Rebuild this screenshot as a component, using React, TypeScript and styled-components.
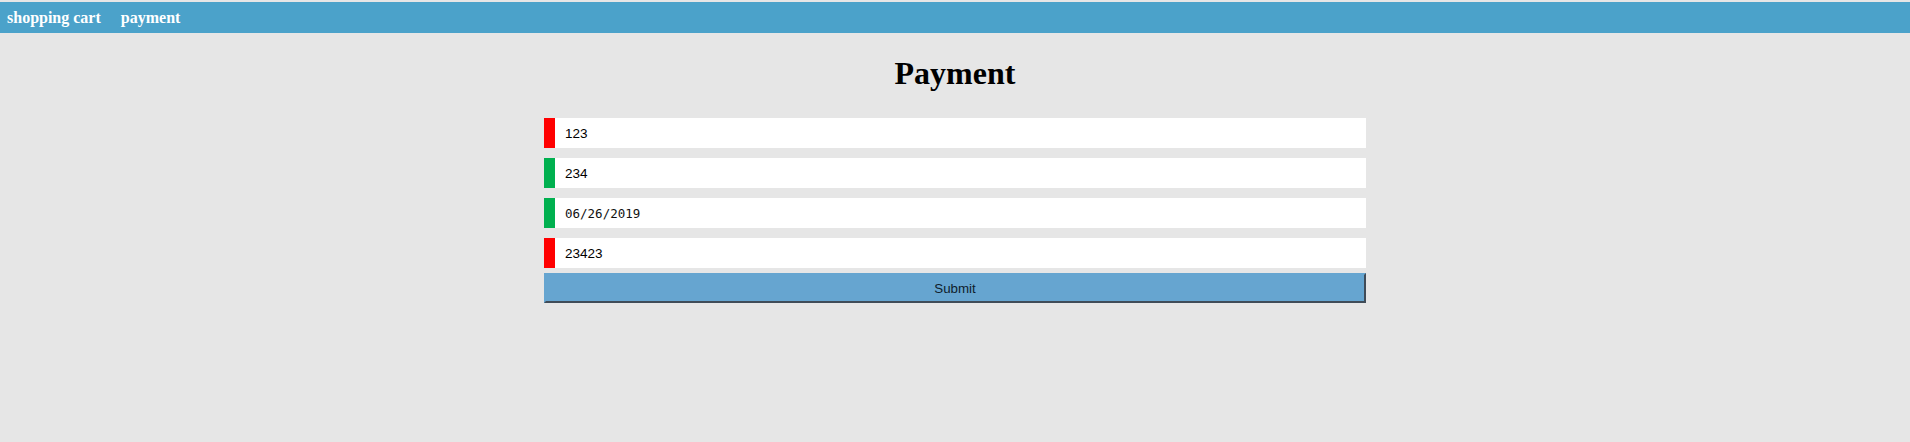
import React from "react";
import styled, { createGlobalStyle } from "styled-components";

const Global = createGlobalStyle`
  html, body { margin: 0; padding: 0; background: #e6e6e6; }
  body { padding-top: 2px; font-family: "Liberation Serif", "Times New Roman", serif; }
`;

const Nav = styled.nav`
  display: flex;
  align-items: center;
  gap: 20px;
  height: 31px;
  padding: 0 7px;
  background: #4ba2ca;
`;

const NavLink = styled.a`
  color: #ffffff;
  font-family: "Liberation Serif", "Times New Roman", serif;
  font-weight: bold;
  font-size: 16px;
  text-decoration: none;
  padding-top: 1px;
`;

const Main = styled.main`
  display: flex;
  flex-direction: column;
  align-items: center;
`;

const Title = styled.h1`
  margin: 22px 0 26px;
  font-family: "Liberation Serif", "Times New Roman", serif;
  font-size: 32px;
  font-weight: bold;
  line-height: 37px;
  color: #000;
`;

const Form = styled.form`
  display: flex;
  flex-direction: column;
  width: 822px;
`;

const Fields = styled.div`
  display: flex;
  flex-direction: column;
  gap: 10px;
`;

const Field = styled.input<{ $valid: boolean }>`
  box-sizing: border-box;
  width: 100%;
  height: 30px;
  border: none;
  border-left: 11px solid ${(p) => (p.$valid ? "#00b04f" : "#ff0000")};
  background: #ffffff;
  padding: 0 0 0 10px;
  font-family: "Liberation Sans", Arial, sans-serif;
  font-size: 13.5px;
  color: #000;
  outline: none;
`;

const DateField = styled(Field)`
  font-family: "DejaVu Sans Mono", "Liberation Mono", monospace;
  font-size: 12.5px;
  font-weight: normal;
  color: #111;
`;

const Submit = styled.button`
  box-sizing: border-box;
  margin-top: 5px;
  width: 100%;
  height: 30px;
  border-style: solid;
  border-width: 2px;
  border-color: #66a5d0 #404c58 #404c58 #66a5d0;
  background: #66a5d0;
  font-family: "Liberation Sans", Arial, sans-serif;
  font-size: 13.33px;
  color: #0f1d2c;
  padding: 0;
`;

export default function App() {
  return (
    <>
      <Global />
      <Nav>
        <NavLink href="#">shopping cart</NavLink>
        <NavLink href="#">payment</NavLink>
      </Nav>
      <Main>
        <Title>Payment</Title>
        <Form onSubmit={(e) => e.preventDefault()}>
          <Fields>
            <Field $valid={false} defaultValue="123" />
            <Field $valid={true} defaultValue="234" />
            <DateField $valid={true} defaultValue="06/26/2019" />
            <Field $valid={false} defaultValue="23423" />
          </Fields>
          <Submit type="submit">Submit</Submit>
        </Form>
      </Main>
    </>
  );
}
